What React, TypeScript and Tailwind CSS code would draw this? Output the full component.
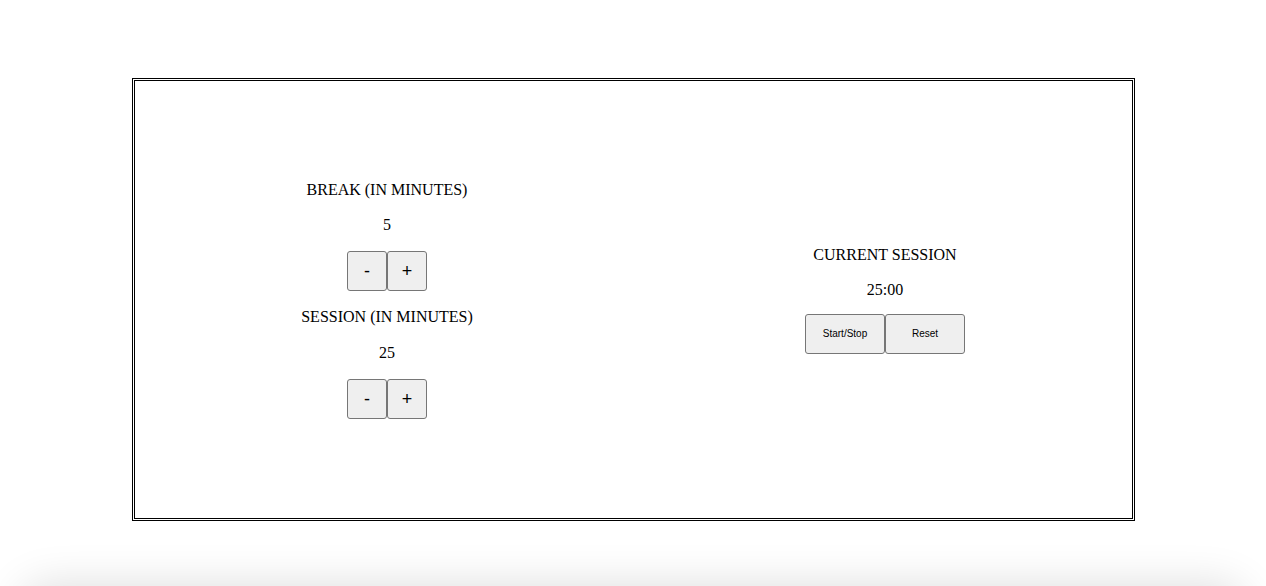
import React from "react";

const serif = { fontFamily: '"Liberation Serif", "Times New Roman", serif' };

function Btn({ children, wide, small }: { children: React.ReactNode; wide?: boolean; small?: boolean }) {
  return (
    <button
      className={
        "h-[40px] bg-[#efefef] border border-[#767676] rounded-[3px] text-black flex items-center justify-center " +
        (wide ? "w-[80px] " : "w-[40px] ") +
        (small ? "text-[10px]" : "text-[18px]")
      }
      style={{ fontFamily: '"Liberation Sans", Arial, sans-serif' }}
    >
      {children}
    </button>
  );
}

export default function App() {
  return (
    <div className="bg-white min-h-[586px] overflow-hidden">
      <div className="pt-[78px] pl-[132px]">
        <div
          className="w-[1003px] h-[443px] border-[3px] border-double border-black flex items-center text-black text-[16px] leading-[18px]"
          style={serif}
        >
          <div className="grid grid-cols-[498px_498px] ml-[3px] w-full items-center">
            <div className="flex flex-col items-center">
              <div>BREAK (IN MINUTES)</div>
              <div className="mt-[17px]">5</div>
              <div className="mt-[17px] flex">
                <Btn>-</Btn>
                <Btn>+</Btn>
              </div>
              <div className="mt-[17px]">SESSION (IN MINUTES)</div>
              <div className="mt-[18px]">25</div>
              <div className="mt-[17px] flex">
                <Btn>-</Btn>
                <Btn>+</Btn>
              </div>
            </div>
            <div className="flex flex-col items-center">
              <div>CURRENT SESSION</div>
              <div className="mt-[17px]">25:00</div>
              <div className="mt-[15px] flex">
                <Btn wide small>Start/Stop</Btn>
                <Btn wide small>Reset</Btn>
              </div>
            </div>
          </div>
        </div>
      </div>
      <div className="mt-[65px] mx-[22px] h-[100px] rounded-[24px] bg-white shadow-[0_0_45px_rgba(0,0,0,0.14)]"></div>
    </div>
  );
}
